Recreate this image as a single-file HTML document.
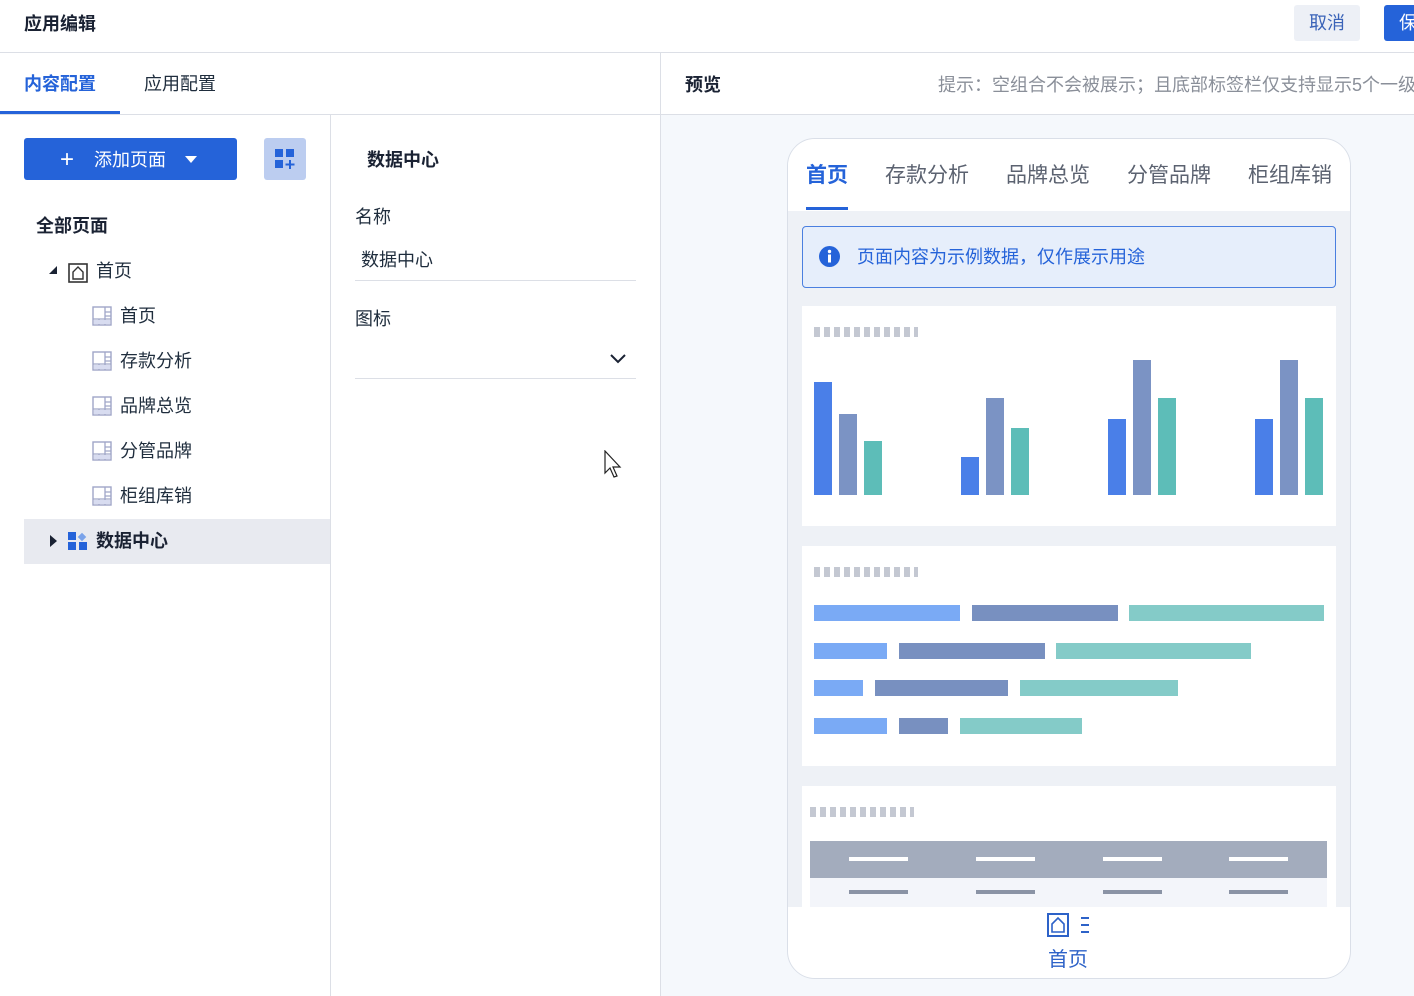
<!DOCTYPE html>
<html><head><meta charset="utf-8"><style>
*{margin:0;padding:0;box-sizing:border-box}
body{width:1414px;height:996px;position:relative;overflow:hidden;background:#fff;font-family:"Liberation Sans","Noto Sans CJK SC",sans-serif;color:#1f2d3d}
.a{position:absolute}
.t{position:absolute;white-space:nowrap;line-height:1;transform:translateY(1px)}
.pi{position:absolute;width:20px;height:20px}
</style></head><body>
<div class="t" style="left:24px;top:14px;font-size:18px;font-weight:bold;color:#1a2233">应用编辑</div>
<div class="a" style="left:1294px;top:5px;width:66px;height:36px;background:#edf0f6;border-radius:3px"></div>
<div class="t" style="left:1309px;top:13px;font-size:18px;color:#3a63b8">取消</div>
<div class="a" style="left:1384px;top:5px;width:40px;height:36px;background:#2563d9;border-radius:3px"></div>
<div class="t" style="left:1399px;top:13px;font-size:18px;color:#fff">保</div>
<div class="a" style="left:0;top:52px;width:1414px;height:1px;background:#dcdfe6"></div>
<div class="a" style="left:330px;top:114px;width:1px;height:882px;background:#dcdfe6"></div>
<div class="a" style="left:660px;top:53px;width:1px;height:943px;background:#dcdfe6"></div>
<div class="a" style="left:0;top:114px;width:1414px;height:1px;background:#dcdfe6"></div>
<div class="t" style="left:24px;top:74px;font-size:18px;font-weight:bold;color:#2563d9">内容配置</div>
<div class="a" style="left:0;top:111px;width:120px;height:3px;background:#2563d9"></div>
<div class="t" style="left:144px;top:74px;font-size:18px;color:#1f2d3d">应用配置</div>
<div class="a" style="left:24px;top:138px;width:213px;height:42px;background:#2563d9;border-radius:3px"></div>
<div class="t" style="left:60px;top:147px;font-size:24px;color:#fff;font-weight:300">+</div>
<div class="t" style="left:94px;top:150px;font-size:18px;color:#fff">添加页面</div>
<div class="a" style="left:185px;top:156px;width:0;height:0;border-left:6px solid transparent;border-right:6px solid transparent;border-top:7px solid #fff"></div>
<div class="a" style="left:264px;top:138px;width:42px;height:42px;background:#bccdf0;border-radius:3px"></div>
<svg class="a" style="left:275px;top:149px" width="21" height="21" viewBox="0 0 21 21"><rect x="0" y="0" width="8" height="8" fill="#2563d9"/><rect x="11" y="0" width="8" height="8" fill="#2563d9"/><rect x="0" y="11" width="8" height="8" fill="#2563d9"/><path d="M15 11v9M10.5 15.5h9" stroke="#2563d9" stroke-width="2"/></svg>
<div class="t" style="left:36px;top:216px;font-size:18px;font-weight:bold;color:#1a2233">全部页面</div>
<div class="a" style="left:49px;top:266px;width:0;height:0;border-left:8px solid transparent;border-bottom:8px solid #1a2233"></div>
<svg class="a" style="left:68px;top:263px" width="20" height="20" viewBox="0 0 20 20"><rect x="1" y="1" width="18" height="18" fill="none" stroke="#333" stroke-width="1.6"/><path d="M5 16V9l5-5 5 5v7z" fill="none" stroke="#333" stroke-width="1.4"/></svg>
<div class="t" style="left:96px;top:261px;font-size:18px">首页</div>
<svg width="0" height="0" style="position:absolute"><defs><symbol id="pg" viewBox="0 0 20 20"><rect x="1" y="1" width="18" height="18" fill="#fff" stroke="#a0a6c8" stroke-width="1.4"/><path d="M13 1v12M13 6h6M13 10h6M1 13h18M7 13v6M13 13v6" stroke="#a0a6c8" stroke-width="1.3" fill="none"/><rect x="2" y="14" width="16" height="4" fill="#d8dcf0"/></symbol></defs></svg>
<svg class="pi" style="left:92px;top:306px"><use href="#pg"/></svg>
<div class="t" style="left:120px;top:306px;font-size:18px">首页</div>
<svg class="pi" style="left:92px;top:351px"><use href="#pg"/></svg>
<div class="t" style="left:120px;top:351px;font-size:18px">存款分析</div>
<svg class="pi" style="left:92px;top:396px"><use href="#pg"/></svg>
<div class="t" style="left:120px;top:396px;font-size:18px">品牌总览</div>
<svg class="pi" style="left:92px;top:441px"><use href="#pg"/></svg>
<div class="t" style="left:120px;top:441px;font-size:18px">分管品牌</div>
<svg class="pi" style="left:92px;top:486px"><use href="#pg"/></svg>
<div class="t" style="left:120px;top:486px;font-size:18px">柜组库销</div>
<div class="a" style="left:24px;top:519px;width:306px;height:45px;background:#e8eaf0"></div>
<div class="a" style="left:50px;top:535px;width:0;height:0;border-top:6px solid transparent;border-bottom:6px solid transparent;border-left:7px solid #1a2233"></div>
<svg class="a" style="left:68px;top:531px" width="20" height="20" viewBox="0 0 20 20"><rect x="0" y="1" width="8" height="8" fill="#2563d9"/><rect x="11" y="3" width="6" height="6" fill="#7aa3ea" transform="rotate(45 14 6)"/><rect x="0" y="11" width="8" height="8" fill="#2563d9"/><rect x="11" y="11" width="8" height="8" fill="#2563d9"/></svg>
<div class="t" style="left:96px;top:531px;font-size:18px;font-weight:bold;color:#1a2233">数据中心</div>
<div class="t" style="left:367px;top:150px;font-size:18px;font-weight:bold;color:#1a2233">数据中心</div>
<div class="t" style="left:355px;top:207px;font-size:18px">名称</div>
<div class="t" style="left:361px;top:250px;font-size:18px">数据中心</div>
<div class="a" style="left:355px;top:280px;width:281px;height:1px;background:#dcdfe6"></div>
<div class="t" style="left:355px;top:309px;font-size:18px">图标</div>
<svg class="a" style="left:609px;top:353px" width="18" height="12" viewBox="0 0 18 12"><path d="M2 2l7 7 7-7" fill="none" stroke="#1a2233" stroke-width="2"/></svg>
<div class="a" style="left:355px;top:378px;width:281px;height:1px;background:#dcdfe6"></div>
<svg class="a" style="left:604px;top:450px" width="22" height="30" viewBox="0 0 22 30"><path d="M1 1v22l5-5 4 9 3-1-4-9h7z" fill="#fff" stroke="#222" stroke-width="1.2"/></svg>
<div class="t" style="left:685px;top:75px;font-size:18px;font-weight:bold;color:#1a2233">预览</div>
<div class="t" style="left:938px;top:75px;font-size:18px;color:#8a8f99">提示：空组合不会被展示；且底部标签栏仅支持显示5个一级</div>
<div class="a" style="left:661px;top:115px;width:753px;height:881px;background:#f5f8fc"></div>
<div class="a" style="left:787px;top:138px;width:564px;height:841px;background:#eef1f6;border:1px solid #dadfe8;border-radius:28px;overflow:hidden">
  <div class="a" style="left:0;top:0;width:564px;height:72px;background:#fff"></div>
  <div class="t" style="left:18px;top:25px;font-size:21px;font-weight:bold;color:#2563d9">首页</div>
  <div class="a" style="left:18px;top:68px;width:42px;height:3px;background:#2563d9"></div>
  <div class="t" style="left:97px;top:25px;font-size:21px;color:#5b6270">存款分析</div>
  <div class="t" style="left:218px;top:25px;font-size:21px;color:#5b6270">品牌总览</div>
  <div class="t" style="left:339px;top:25px;font-size:21px;color:#5b6270">分管品牌</div>
  <div class="t" style="left:460px;top:25px;font-size:21px;color:#5b6270">柜组库销</div>
  <div class="a" style="left:14px;top:87px;width:534px;height:62px;background:#e6eefb;border:1px solid #4a7fe0;border-radius:4px"></div>
  <svg class="a" style="left:31px;top:107px" width="21" height="21" viewBox="0 0 21 21"><circle cx="10.5" cy="10.5" r="10.5" fill="#2563d9"/><rect x="9" y="8.5" width="3" height="8" fill="#fff"/><circle cx="10.5" cy="5.5" r="1.7" fill="#fff"/></svg>
  <div class="t" style="left:69px;top:108px;font-size:18px;color:#2563d9">页面内容为示例数据，仅作展示用途</div>
  <div class="a" style="left:14px;top:167px;width:534px;height:220px;background:#fff"></div>
  <div class="a" style="left:26px;top:188px;width:104px;height:10px;background:repeating-linear-gradient(90deg,#c4c8d2 0 6px,transparent 6px 10px)"></div>
  <svg class="a" style="left:0;top:0" width="564" height="400">
    <g fill="#4a7fe8"><rect x="26" y="243" width="18" height="113"/><rect x="173" y="318" width="18" height="38"/><rect x="320" y="280" width="18" height="76"/><rect x="467" y="280" width="18" height="76"/></g>
    <g fill="#7b93c4"><rect x="51" y="275" width="18" height="81"/><rect x="198" y="259" width="18" height="97"/><rect x="345" y="221" width="18" height="135"/><rect x="492" y="221" width="18" height="135"/></g>
    <g fill="#5dbdb8"><rect x="76" y="302" width="18" height="54"/><rect x="223" y="289" width="18" height="67"/><rect x="370" y="259" width="18" height="97"/><rect x="517" y="259" width="18" height="97"/></g>
  </svg>
  <div class="a" style="left:14px;top:407px;width:534px;height:220px;background:#fff"></div>
  <div class="a" style="left:26px;top:428px;width:104px;height:10px;background:repeating-linear-gradient(90deg,#c4c8d2 0 6px,transparent 6px 10px)"></div>
  <svg class="a" style="left:0;top:400px" width="564" height="240">
    <g fill="#7aaaf5"><rect x="26" y="66" width="146" height="16"/><rect x="26" y="104" width="73" height="16"/><rect x="26" y="141" width="49" height="16"/><rect x="26" y="179" width="73" height="16"/></g>
    <g fill="#7890c0"><rect x="184" y="66" width="146" height="16"/><rect x="111" y="104" width="146" height="16"/><rect x="87" y="141" width="133" height="16"/><rect x="111" y="179" width="49" height="16"/></g>
    <g fill="#84cbc8"><rect x="341" y="66" width="195" height="16"/><rect x="268" y="104" width="195" height="16"/><rect x="232" y="141" width="158" height="16"/><rect x="172" y="179" width="122" height="16"/></g>
  </svg>
  <div class="a" style="left:14px;top:647px;width:534px;height:130px;background:#fff"></div>
  <div class="a" style="left:22px;top:668px;width:104px;height:10px;background:repeating-linear-gradient(90deg,#c4c8d2 0 6px,transparent 6px 10px)"></div>
  <div class="a" style="left:22px;top:702px;width:517px;height:37px;background:#a3acbd"></div>
  <div class="a" style="left:22px;top:739px;width:517px;height:30px;background:#f3f5fa"></div>
  <svg class="a" style="left:0;top:700px" width="564" height="60">
    <g fill="#fff"><rect x="61" y="18" width="59" height="4"/><rect x="188" y="18" width="59" height="4"/><rect x="315" y="18" width="59" height="4"/><rect x="441" y="18" width="59" height="4"/></g>
    <g fill="#8a93a5"><rect x="61" y="51" width="59" height="4"/><rect x="188" y="51" width="59" height="4"/><rect x="315" y="51" width="59" height="4"/><rect x="441" y="51" width="59" height="4"/></g>
  </svg>
  <div class="a" style="left:0;top:768px;width:564px;height:73px;background:#fff"></div>
  <svg class="a" style="left:259px;top:774px" width="46" height="24" viewBox="0 0 46 24"><rect x="1" y="1" width="20" height="22" fill="none" stroke="#2d62c8" stroke-width="2"/><path d="M5 19V11l6-6 6 6v8z" fill="none" stroke="#2d62c8" stroke-width="1.6"/><path d="M34 5h8M34 12h8M34 19h8" stroke="#2d62c8" stroke-width="2"/></svg>
  <div class="t" style="left:260px;top:810px;font-size:20px;color:#2d62c8">首页</div>
</div>
</body></html>
